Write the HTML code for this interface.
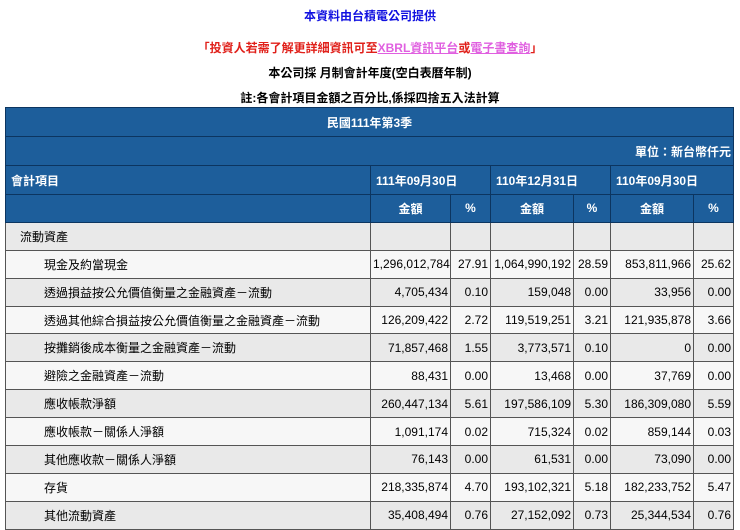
<!DOCTYPE html>
<html><head><meta charset="utf-8"><style>
body{margin:0;background:#fff;font-family:"Liberation Sans","Noto Sans CJK TC",sans-serif;font-size:12px;color:#000;width:740px;height:524px;overflow:hidden;position:relative}
.c{position:absolute;left:0;width:740px;text-align:center;font-weight:bold;font-size:12px}
table{position:absolute;left:5px;top:107px;border-collapse:collapse;table-layout:fixed;width:728px}
td{border:1px solid #555;padding:0 5px;height:26.9px;white-space:nowrap;overflow:hidden}
tr.h td{background:#1d5e9b;color:#fff;font-weight:bold;border-color:#0c3560}
tr.a td{background:#e9e9e9}
tr.b td{background:#f7f7f7}
td.r{text-align:right;padding:0 2px}
td.i{padding-left:38px}
</style></head><body>
<div class="c" style="top:7px;color:#1010e0">本資料由台積電公司提供</div>
<div class="c" style="top:39px;color:#e0201a">「投資人若需了解更詳細資訊可至<span style="color:#e060e0;text-decoration:underline">XBRL資訊平台</span>或<span style="color:#e060e0;text-decoration:underline">電子書查詢</span>」</div>
<div class="c" style="top:64px">本公司採 月制會計年度(空白表曆年制)</div>
<div class="c" style="top:89px">註:各會計項目金額之百分比,係採四捨五入法計算</div>
<table>
<colgroup><col style="width:365px"><col style="width:80px"><col style="width:40px"><col style="width:83px"><col style="width:37px"><col style="width:83px"><col style="width:40px"></colgroup>
<tr class="h"><td colspan="7" style="text-align:center;height:28px">民國111年第3季</td></tr>
<tr class="h"><td colspan="7" class="r" style="height:28px;padding-right:2px">單位：新台幣仟元</td></tr>
<tr class="h"><td style="height:28px">會計項目</td><td colspan="2">111年09月30日</td><td colspan="2">110年12月31日</td><td colspan="2">110年09月30日</td></tr>
<tr class="h" style="text-align:center"><td></td><td>金額</td><td>%</td><td>金額</td><td>%</td><td>金額</td><td>%</td></tr>
<tr class="a"><td style="padding-left:14px">流動資產</td><td></td><td></td><td></td><td></td><td></td><td></td></tr>
<tr class="b"><td class="i">現金及約當現金</td><td class="r">1,296,012,784</td><td class="r">27.91</td><td class="r">1,064,990,192</td><td class="r">28.59</td><td class="r">853,811,966</td><td class="r">25.62</td></tr>
<tr class="a"><td class="i">透過損益按公允價值衡量之金融資產－流動</td><td class="r">4,705,434</td><td class="r">0.10</td><td class="r">159,048</td><td class="r">0.00</td><td class="r">33,956</td><td class="r">0.00</td></tr>
<tr class="b"><td class="i">透過其他綜合損益按公允價值衡量之金融資產－流動</td><td class="r">126,209,422</td><td class="r">2.72</td><td class="r">119,519,251</td><td class="r">3.21</td><td class="r">121,935,878</td><td class="r">3.66</td></tr>
<tr class="a"><td class="i">按攤銷後成本衡量之金融資產－流動</td><td class="r">71,857,468</td><td class="r">1.55</td><td class="r">3,773,571</td><td class="r">0.10</td><td class="r">0</td><td class="r">0.00</td></tr>
<tr class="b"><td class="i">避險之金融資產－流動</td><td class="r">88,431</td><td class="r">0.00</td><td class="r">13,468</td><td class="r">0.00</td><td class="r">37,769</td><td class="r">0.00</td></tr>
<tr class="a"><td class="i">應收帳款淨額</td><td class="r">260,447,134</td><td class="r">5.61</td><td class="r">197,586,109</td><td class="r">5.30</td><td class="r">186,309,080</td><td class="r">5.59</td></tr>
<tr class="b"><td class="i">應收帳款－關係人淨額</td><td class="r">1,091,174</td><td class="r">0.02</td><td class="r">715,324</td><td class="r">0.02</td><td class="r">859,144</td><td class="r">0.03</td></tr>
<tr class="a"><td class="i">其他應收款－關係人淨額</td><td class="r">76,143</td><td class="r">0.00</td><td class="r">61,531</td><td class="r">0.00</td><td class="r">73,090</td><td class="r">0.00</td></tr>
<tr class="b"><td class="i">存貨</td><td class="r">218,335,874</td><td class="r">4.70</td><td class="r">193,102,321</td><td class="r">5.18</td><td class="r">182,233,752</td><td class="r">5.47</td></tr>
<tr class="a"><td class="i">其他流動資產</td><td class="r">35,408,494</td><td class="r">0.76</td><td class="r">27,152,092</td><td class="r">0.73</td><td class="r">25,344,534</td><td class="r">0.76</td></tr>
</table>
</body></html>
